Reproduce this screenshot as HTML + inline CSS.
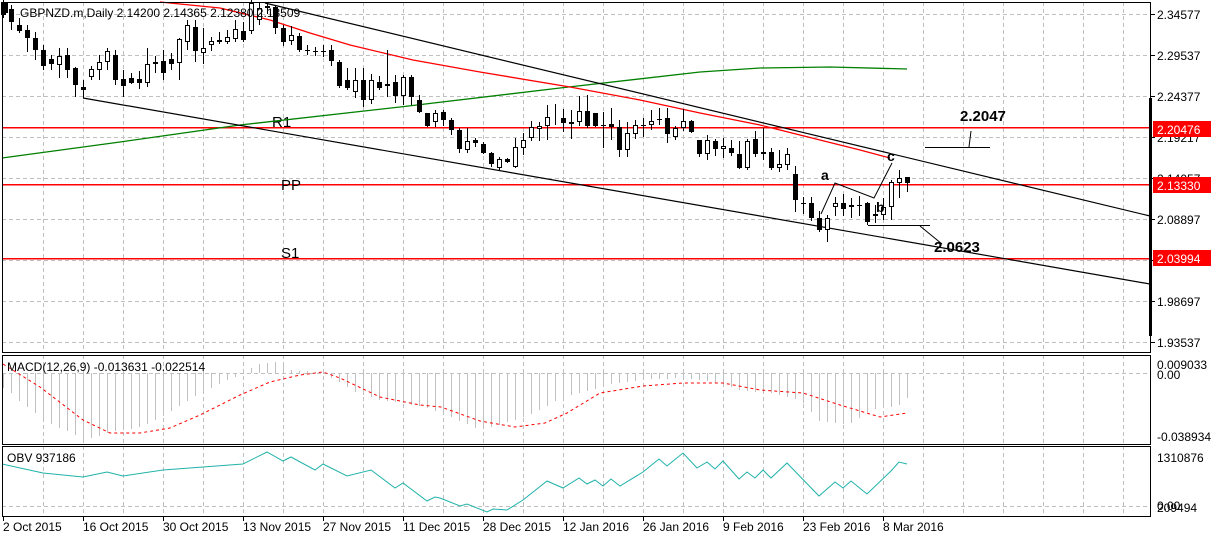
<!DOCTYPE html>
<html><head><meta charset="utf-8"><style>
html,body{margin:0;padding:0;background:#fff;width:1211px;height:540px;overflow:hidden}
svg{display:block}
text{font-family:"Liberation Sans",sans-serif}
</style></head><body>
<svg id="s" width="1211" height="540" xmlns="http://www.w3.org/2000/svg"></svg>
<script>
const S=document.getElementById('s');let h='';
const L=(x1,y1,x2,y2,c,w,d)=>h+=`<line x1="${x1}" y1="${y1}" x2="${x2}" y2="${y2}" stroke="${c}" stroke-width="${w||1}"${d?` stroke-dasharray="${d}"`:''} shape-rendering="crispEdges"/>`;
const T=(x,y,t,o)=>h+=`<text x="${x}" y="${y}" ${o||'font-size="12" fill="#000"'}>${t}</text>`;
const P=(pts,c,w,d)=>h+=`<polyline points="${pts.map(p=>p.join(',')).join(' ')}" fill="none" stroke="${c}" stroke-width="${w||1}"${d?` stroke-dasharray="${d}"`:''}/>`;
const gx=[];for(let x=43;x<1150;x+=40)gx.push(x);
const panels=[[2,352],[355,444],[446,516]];
panels.forEach(([a,b])=>gx.forEach(x=>L(x+.5,a,x+.5,b,'#c0c0c0',1,'4 3')));
[14,55,96,137,178,219,260,301,342].forEach(y=>L(2,y+.5,1150,y+.5,'#c0c0c0',1,'4 3'));
L(2,373.5,1150,373.5,'#c0c0c0',1,'4 3');L(2,506.5,1150,506.5,'#c0c0c0',1,'4 3');
[127,184,258].forEach(y=>L(2,y+.5,1150,y+.5,'#ff0000',1.5));
T(272,127,'R1','font-size="15" fill="#000"');T(281,190,'PP','font-size="15" fill="#000"');T(281,258,'S1','font-size="15" fill="#000"');
P([[2,158],[120,142],[240,125],[400,107],[560,88],[700,72],[760,68],[830,67],[907,69]],'#008000',1.3);
P([[160,2],[220,8],[270,20],[310,33],[350,45],[413,60],[480,72],[570,87],[640,100],[700,113],[760,125],[820,140],[860,150],[890,158]],'#ff0000',1.3);
P([[265,3],[1150,216]],'#000',1.2);P([[83,98],[1150,284]],'#000',1.2);
const D=`3:2,15,0,18,0;11:9,22,5,30,0;19:25,31,18,33,0;27:30,38,25,52,0;35:38,50,32,60,0;43:50,66,45,70,0;51:59,64,55,70,0;59:56,65,48,78,1;67:55,70,48,78,0;75:68,85,67,97,0;83:87,90,80,98,0;91:69,77,66,80,1;99:62,70,55,80,1;107:51,62,48,70,1;115:55,80,50,85,0;123:79,86,70,97,0;131:78,83,73,84,0;139:79,83,71,89,0;147:64,83,48,87,1;155:62,64,56,73,1;163:61,73,50,80,0;171:59,64,53,70,0;179:39,63,38,80,1;187:25,42,20,50,1;195:27,51,20,62,0;203:48,53,28,64,1;211:41,45,37,51,1;219:40,42,32,44,0;227:37,42,30,44,1;235:29,39,20,42,1;243:31,40,22,42,0;251:3,31,0,34,1;259:8,20,2,25,1;267:6,8,2,14,0;275:7,28,5,34,0;283:28,42,25,46,0;291:35,41,26,45,1;299:36,50,33,52,0;307:50,51,45,55,0;315:51,52,47,56,0;323:51,52,45,57,0;331:50,61,45,66,0;339:62,86,60,88,0;347:80,88,68,90,0;355:80,92,68,98,1;363:80,100,68,107,0;371:80,100,74,104,1;379:82,88,76,90,0;387:84,86,50,97,0;395:82,96,75,103,0;403:77,96,75,105,1;411:77,97,75,105,0;419:100,112,95,113,0;427:113,126,113,127,0;435:113,122,110,127,1;443:112,120,110,126,0;451:120,130,118,135,0;459:130,149,128,153,0;467:141,150,128,153,1;475:140,143,138,147,0;483:144,153,142,154,0;491:153,164,152,167,0;499:159,168,157,170,1;507:159,162,158,163,0;515:147,167,138,168,1;523:140,148,133,155,1;531:127,138,121,141,1;539:126,129,122,141,1;547:117,126,105,140,1;555:118,119,104,125,1;563:118,123,109,132,0;571:122,124,110,139,1;579:111,122,96,126,1;587:111,126,95,128,0;595:113,126,113,127,0;603:125,126,112,148,0;611:124,127,108,140,0;619:127,150,120,157,0;627:133,150,122,157,1;635:125,134,120,139,1;643:125,126,118,137,0;651:121,125,110,130,1;659:119,120,108,125,0;667:118,134,108,143,0;675:128,137,126,140,1;683:121,128,109,131,1;691:121,132,120,133,0;699:140,154,140,157,0;707:140,154,135,160,1;715:141,149,139,156,0;723:146,149,138,158,1;731:148,153,140,156,0;739:154,168,141,169,0;747:141,168,139,170,1;755:139,154,131,157,0;763:152,154,128,160,1;771:152,168,148,170,0;779:164,168,150,172,1;787:154,165,148,170,1;795:174,200,166,212,0;803:203,204,197,214,0;811:203,218,197,221,0;819:218,230,211,232,0;827:218,230,215,242,1;835:203,207,197,216,1;843:203,209,194,216,0;851:205,207,198,218,1;859:205,206,196,216,0;867:203,222,202,225,0;875:214,216,205,223,1;883:207,215,198,220,1;891:182,207,180,220,1;899:178,183,170,198,1;907:177,183,177,192,0`;
D.split(';').forEach(s=>{const [x,r]=s.split(':');const [t,b,hi,lo,w]=r.split(',').map(Number);const X=+x;
L(X+.5,hi,X+.5,lo,'#000',1);
const bh=Math.max(b-t,1);
if(w==1)h+=`<rect x="${X-2+.5}" y="${t+.5}" width="4" height="${Math.max(bh-1,0)}" fill="#fff" stroke="#000" stroke-width="1" shape-rendering="crispEdges"/>`;
else h+=`<rect x="${X-2}" y="${t}" width="5" height="${bh}" fill="#000" shape-rendering="crispEdges"/>`;});
T(960,121,'2.2047','font-size="15" font-weight="bold" fill="#000"');
L(925,147.5,990,147.5,'#000',1);P([[971,131],[969,147]],'#000',1);
T(934,252,'2.0623','font-size="15" font-weight="bold" fill="#000"');
L(868,225.5,930,225.5,'#000',1);P([[920,226],[942,244]],'#000',1);
T(821,180,'a','font-size="14" font-weight="bold" fill="#000"');
T(876,212,'b','font-size="14" font-weight="bold" fill="#000"');
T(887,161,'c','font-size="14" font-weight="bold" fill="#000"');
P([[821,214],[835,183],[874,198],[892,163]],'#000',1);
const interp=(pts,x)=>{for(let i=0;i<pts.length-1;i++){const [a,ya]=pts[i],[b,yb]=pts[i+1];if(x>=a&&x<=b)return ya+(yb-ya)*(x-a)/(b-a)}return pts[x<pts[0][0]?0:pts.length-1][1]};
const hist=[[3,388],[12,394],[20,402],[35,413],[50,424],[70,432],[83,441],[110,432],[140,427],[160,418],[180,405],[200,393],[220,383],[240,375],[255,365],[275,362],[290,370],[320,372],[335,380],[355,392],[380,400],[400,403],[420,406],[440,413],[451,417],[480,430],[515,420],[540,410],[560,398],[580,393],[610,384],[640,380],[680,378],[710,381],[740,390],[770,393],[800,400],[820,422],[850,424],[870,410],[900,405],[907,398]];
for(let x=3;x<=907;x+=8){const y=Math.round(interp(hist,x));L(x+.5,373,x+.5,y,'#c0c0c0',1);}
const sig=[[3,364],[40,387],[83,420],[110,433],[140,433],[170,428],[200,415],[240,395],[270,382],[300,375],[323,372],[340,378],[380,397],[420,405],[441,407],[480,421],[515,427],[545,423],[567,413],[600,393],[643,386],[683,383],[723,383],[760,390],[803,393],[840,405],[880,417],[907,413]];
P(sig,'#ff0000',1,'3 3');
T(7,371,'MACD(12,26,9) -0.013631 -0.022514');
const obv=[[2,464],[43,473],[83,477],[107,472],[123,476],[163,470],[243,464],[267,452],[283,461],[291,457],[315,470],[323,464],[347,476],[371,470],[395,488],[403,483],[427,501],[435,497],[440,498],[460,506],[467,504],[487,512],[493,509],[507,510],[523,500],[547,481],[563,488],[579,478],[587,484],[595,480],[603,486],[611,479],[620,486],[643,472],[659,459],[667,466],[683,453],[697,468],[707,462],[715,469],[723,461],[739,479],[747,472],[755,478],[763,470],[771,478],[787,463],[819,496],[835,482],[843,488],[851,481],[867,494],[891,471],[899,462],[907,464]];
P(obv,'#20b2aa',1);
T(7,462,'OBV 937186');
h+=`<rect x="2.5" y="2.5" width="1148" height="350" fill="none" stroke="#000"/>`;
h+=`<rect x="2.5" y="355.5" width="1148" height="89" fill="none" stroke="#000"/>`;
h+=`<rect x="2.5" y="446.5" width="1148" height="70" fill="none" stroke="#000"/>`;
h+=`<rect x="1149" y="98" width="3" height="238" fill="#000"/>`;
h+=`<rect x="3" y="3" width="5" height="10" fill="#000"/>`;
T(20,17,'GBPNZD.m,Daily  2.14200 2.14365 2.12380 2.13509');
[[14,'2.34577'],[55,'2.29537'],[96,'2.24377'],[137,'2.19217'],[178,'2.14057'],[219,'2.08897'],[260,'2.03737'],[301,'1.98697'],[342,'1.93537']].forEach(([y,t])=>{L(1151,y+.5,1155,y+.5,'#000');T(1157,y+5,t);});
[[129,'2.20476'],[185,'2.13330'],[258,'2.03994']].forEach(([y,t])=>{h+=`<rect x="1153" y="${y-8}" width="58" height="16" fill="#ff0000"/>`;T(1157,y+5,t,'font-size="12" fill="#fff"');});
T(1157,369,'0.009033');T(1157,379,'0.00');T(1157,441,'-0.038934');
T(1157,462,'1310876');T(1157,510,'0.00');T(1157,512,'209494');
const dates=['2 Oct 2015','16 Oct 2015','30 Oct 2015','13 Nov 2015','27 Nov 2015','11 Dec 2015','28 Dec 2015','12 Jan 2016','26 Jan 2016','9 Feb 2016','23 Feb 2016','8 Mar 2016'];
dates.forEach((d,i)=>{const x=3+80*i;L(x+.5,517,x+.5,521,'#000');T(x,531,d);});
S.innerHTML=h;
</script>
</body></html>
